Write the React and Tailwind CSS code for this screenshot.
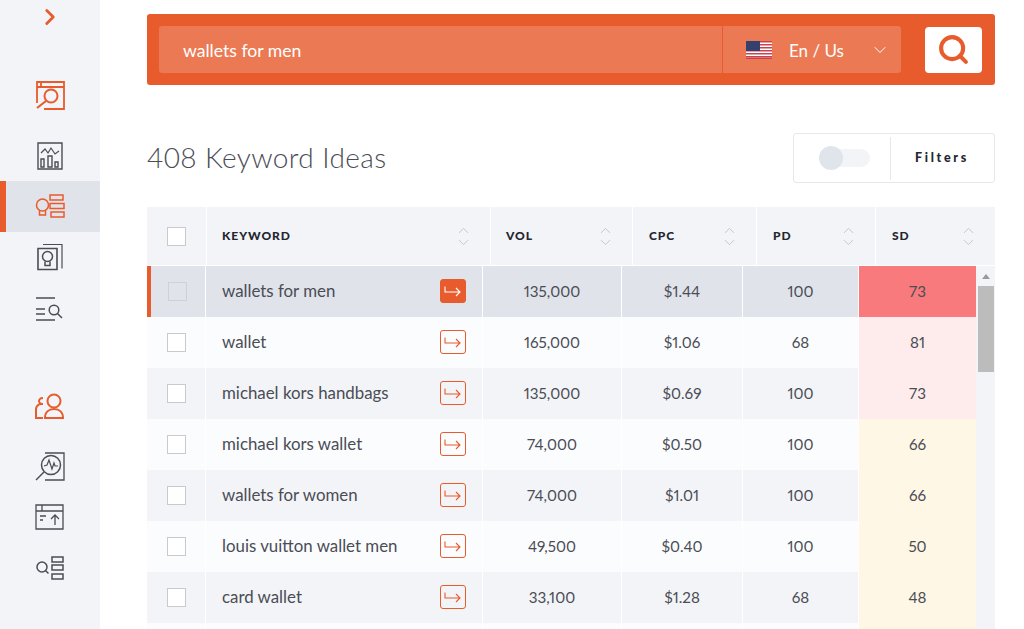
import { Search, ChevronDown, ChevronUp, ChevronRight } from 'lucide-react'

const orange = '#e85b2c'
const dark = '#4a4d55'

const rows = [
  { kw: 'wallets for men', vol: '135,000', cpc: '$1.44', pd: '100', sd: '73', sdBg: 'bg-[#f87a7d]', active: true },
  { kw: 'wallet', vol: '165,000', cpc: '$1.06', pd: '68', sd: '81', sdBg: 'bg-[#fdeceb]' },
  { kw: 'michael kors handbags', vol: '135,000', cpc: '$0.69', pd: '100', sd: '73', sdBg: 'bg-[#fdeceb]' },
  { kw: 'michael kors wallet', vol: '74,000', cpc: '$0.50', pd: '100', sd: '66', sdBg: 'bg-[#fff7e6]' },
  { kw: 'wallets for women', vol: '74,000', cpc: '$1.01', pd: '100', sd: '66', sdBg: 'bg-[#fff7e6]' },
  { kw: 'louis vuitton wallet men', vol: '49,500', cpc: '$0.40', pd: '100', sd: '50', sdBg: 'bg-[#fff7e6]' },
  { kw: 'card wallet', vol: '33,100', cpc: '$1.28', pd: '68', sd: '48', sdBg: 'bg-[#fff7e6]' },
  { kw: '', vol: '', cpc: '', pd: '', sd: '', sdBg: 'bg-[#fff7e6]' },
]

function Icon({ w = 30, h = 30, color = dark, children }) {
  return (
    <svg width={w} height={h} viewBox={`0 0 ${w} ${h}`} fill="none" stroke={color} strokeWidth="1.5">
      {children}
    </svg>
  )
}

const SearchPageIcon = () => (
  <Icon color={orange}>
    <path d="M2 23V2h27v27H9M2 7h27M6 2v5" strokeWidth="1.8" />
    <circle cx="16" cy="16" r="6.5" strokeWidth="2" />
    <path d="M11 21l-9 7" strokeWidth="2.2" />
  </Icon>
)
const ChartIcon = () => (
  <Icon w={26} h={30}>
    <path d="M1 2h24v26H1z" strokeWidth="1.4" />
    <path d="M4 12l4-4 3 4 3-5 4 6 4-3" strokeWidth="1.2" />
    <path d="M4 18h3v8H4zM11 15h4v11h-4zM18 21h3v5h-3z" strokeWidth="1.4" />
  </Icon>
)
const IdeasIcon = () => (
  <Icon color={orange}>
    <circle cx="7.5" cy="13" r="6" />
    <path d="M4.5 18v5h6v-5M15 3h13v5H15zM15 11.5h14v5H15zM16 20h13v5H16z" />
  </Icon>
)
const BulbIcon = () => (
  <Icon w={26} h={28}>
    <path d="M6 1.5h19v24" strokeWidth="1.2" />
    <path d="M1 5.5h19v21H1z" strokeWidth="1.6" />
    <circle cx="10.5" cy="13.5" r="5" />
    <path d="M8 18.5v4h5v-4" />
  </Icon>
)
const ListSearchIcon = () => (
  <Icon h={28}>
    <path d="M1 2h19M1 13h9M1 24h19M1 18h9" strokeWidth="1.3" />
    <circle cx="19" cy="14" r="4.8" />
    <path d="M22.5 17.5l4.5 4.5" />
  </Icon>
)
const PeopleIcon = () => (
  <Icon h={26} color={orange}>
    <circle cx="19" cy="8" r="6.5" strokeWidth="2" />
    <path d="M10 25c0-6 4-9 9-9s9 3 9 9z" strokeWidth="2" />
    <path d="M8 5C5 5 4 7 4 8s1 3 4 3H6c-3 0-5 3-5 5v9h7" strokeWidth="2" />
  </Icon>
)
const PulseIcon = () => (
  <Icon>
    <path d="M10 2h19v27H10" strokeWidth="1.3" />
    <circle cx="16" cy="14" r="9.5" strokeWidth="1.5" />
    <path d="M9 15l3-1 2-5 3 9 2-6 1 3h3" strokeWidth="1.2" />
    <path d="M9 21l-8 8" strokeWidth="1.5" />
  </Icon>
)
const UploadIcon = () => (
  <Icon h={26}>
    <path d="M1 1h27v24H1zM1 7h27M7 1v6" strokeWidth="1.3" />
    <path d="M5 12h6M5 16h3" strokeWidth="1.3" />
    <path d="M20 21v-10M16 15l4-4 4 4" strokeWidth="1.3" />
  </Icon>
)
const FindListIcon = () => (
  <Icon h={26}>
    <circle cx="7" cy="12" r="5" />
    <path d="M10.5 15.5l3 3" />
    <path d="M17 2h11v5H17zM17 10h11v5H17zM17 19h11v5H17z" />
  </Icon>
)

function NavItem({ active, children, className = '' }) {
  return (
    <div className={`h-[51px] flex items-center justify-center ${active ? 'bg-[#e0e3ea] border-l-[6px] border-[#e85b2c] pr-[6px]' : ''} ${className}`}>
      {children}
    </div>
  )
}

function Sidebar() {
  return (
    <aside className="w-[100px] shrink-0 bg-[#f3f4f7] flex flex-col">
      <div className="h-[34px] flex items-center justify-center">
        <ChevronRight size={26} strokeWidth={2.6} color={orange} />
      </div>
      <NavItem className="mt-[35px] mb-[10px]"><SearchPageIcon /></NavItem>
      <NavItem><ChartIcon /></NavItem>
      <NavItem active><IdeasIcon /></NavItem>
      <NavItem className="pb-[2px]"><BulbIcon /></NavItem>
      <NavItem className="pt-[2px]"><ListSearchIcon /></NavItem>
      <NavItem className="mt-[46px] mb-[9px]"><PeopleIcon /></NavItem>
      <NavItem><PulseIcon /></NavItem>
      <NavItem><UploadIcon /></NavItem>
      <NavItem><FindListIcon /></NavItem>
    </aside>
  )
}

function Flag() {
  return (
    <svg width="26" height="18" viewBox="0 0 26 18">
      <rect width="26" height="18" fill="#fff" />
      {[0, 3, 6, 9, 12, 15].map(y => <rect key={y} y={y} width="26" height="1.5" fill="#c9424e" />)}
      <rect y="16.5" width="26" height="1.5" fill="#c9424e" />
      <rect width="14" height="10" fill="#34406e" />
    </svg>
  )
}

function SearchBar() {
  return (
    <div className="h-[71px] bg-[#e85b2c] rounded-[3px] flex items-center pl-3 pr-[13px] text-white">
      <div className="w-[563px] h-[47px] bg-[#eb7a54] rounded-l-[3px] flex items-center pl-6 pt-[3px] text-[17.6px]">wallets for men</div>
      <div className="ml-px w-[178px] h-[47px] bg-[#eb7a54] rounded-r-[3px] flex items-center pl-[23px] text-[17px]">
        <Flag />
        <span className="ml-[17px] pt-[2px]">En / Us</span>
        <ChevronDown size={20} strokeWidth={1.2} className="ml-auto mr-[11px]" />
      </div>
      <button className="ml-auto w-[57px] h-[46px] bg-white rounded-[4px] flex items-center justify-center">
        <Search size={33} strokeWidth={3} color={orange} />
      </button>
    </div>
  )
}

function TitleBar() {
  return (
    <div className="mt-[48px] h-[50px] flex items-center justify-between">
      <h1 className="pb-[3px] text-[28px] font-light text-[#4a4d55] tracking-[0.4px]">408 Keyword Ideas</h1>
      <div className="w-[202px] h-[50px] border border-[#e6e8ee] rounded-[3px] flex items-center">
        <div className="w-[97px] h-[43px] border-r border-[#e6e8ee] flex items-center pl-[26px]">
          <div className="relative w-[50px] h-[18px] bg-[#f3f4f7] rounded-full">
            <span className="absolute -left-[1px] -top-[3px] w-[24px] h-[24px] rounded-full bg-[#e0e5ec]" />
          </div>
        </div>
        <span className="ml-[24px] text-[12.5px] font-black tracking-[2.7px] text-[#23262f]">Filters</span>
      </div>
    </div>
  )
}

function SortArrows() {
  return (
    <span className="ml-auto flex flex-col items-center text-[#b9bbc2]">
      <ChevronUp size={17} strokeWidth={1.1} className="-mb-[5px]" />
      <ChevronDown size={17} strokeWidth={1.1} />
    </span>
  )
}

function HeaderCell({ label, pad = 'pl-[16px]' }) {
  return (
    <div className={`flex items-center border-l border-white pr-[18px] ${pad}`}>
      <span className="text-[12px] font-black tracking-[0.95px] text-[#23262f]">{label}</span>
      <SortArrows />
    </div>
  )
}

function Checkbox({ faded }) {
  return <span className={`block w-[19px] h-[19px] border ${faded ? 'border-[#cfd1d6]' : 'border-[#c9cacd] bg-white'}`} />
}

function Row({ row, index }) {
  const bg = row.active ? 'bg-[#e0e3ea]' : index % 2 === 0 ? 'bg-[#f3f4f7]' : 'bg-[#fbfcfe]'
  const cell = `flex items-center justify-center pb-[1px] border-r border-white ${bg}`
  const hasText = row.kw !== ''
  return (
    <div className="grid grid-cols-[59px_277px_139px_121px_116px_117px] h-[51px] text-[15.2px] text-[#4a4d55] proportional-nums">
      <div className={`${cell} ${row.active ? 'border-l-[4px] border-l-[#e85b2c] pr-[1px]' : ''}`}>
        {hasText && <Checkbox faded={row.active} />}
      </div>
      <div className={`flex items-center pl-[16px] pr-[16px] pb-[1px] border-r border-white text-[16.85px] ${bg}`}>
        <span>{row.kw}</span>
        {hasText && (
          <span className={`ml-auto w-[26px] h-[24px] rounded-[3px] border flex items-center justify-center border-[#e85b2c] ${row.active ? 'bg-[#e85b2c]' : 'bg-transparent'}`}>
            <svg width="18" height="13" viewBox="0 0 18 13" fill="none" stroke={row.active ? '#fff' : orange} strokeWidth="1.1">
              <path d="M1 1.5v5.5h15M12 3l4 4-4 4" />
            </svg>
          </span>
        )}
      </div>
      <div className={cell}>{row.vol}</div>
      <div className={cell}>{row.cpc}</div>
      <div className={cell}>{row.pd}</div>
      <div className={`flex items-center justify-center pb-[1px] ${row.sdBg}`}>{row.sd}</div>
    </div>
  )
}

function Table() {
  return (
    <div className="mt-[24px]">
      <div className="grid grid-cols-[59px_284px_142px_124px_119px_120px] h-[58px] bg-[#f3f4f7] border-b border-white box-content">
        <div className="flex items-center justify-center pr-[1px]"><Checkbox /></div>
        <HeaderCell label="KEYWORD" pad="pl-[15px]" />
        <HeaderCell label="VOL" pad="pl-[15px]" />
        <HeaderCell label="CPC" />
        <HeaderCell label="PD" />
        <HeaderCell label="SD" />
      </div>
      <div className="flex">
        <div className="w-[829px] shrink-0">
          {rows.map((r, i) => <Row key={i} row={r} index={i} />)}
        </div>
        <div className="flex-1 bg-[#f3f4f7] flex flex-col items-center pt-[8px]">
          <span className="block w-0 h-0 border-x-[4px] border-x-transparent border-b-[5px] border-b-[#9a9a9a]" />
          <span className="block mt-[7px] w-[16px] h-[86px] bg-[#bcbcbc]" />
        </div>
      </div>
    </div>
  )
}

export default function App() {
  return (
    <div className="h-[629px] w-[1024px] overflow-hidden flex bg-white font-['Lato',sans-serif]">
      <Sidebar />
      <main className="w-[848px] ml-[47px] pt-[14px]">
        <SearchBar />
        <TitleBar />
        <Table />
      </main>
    </div>
  )
}
